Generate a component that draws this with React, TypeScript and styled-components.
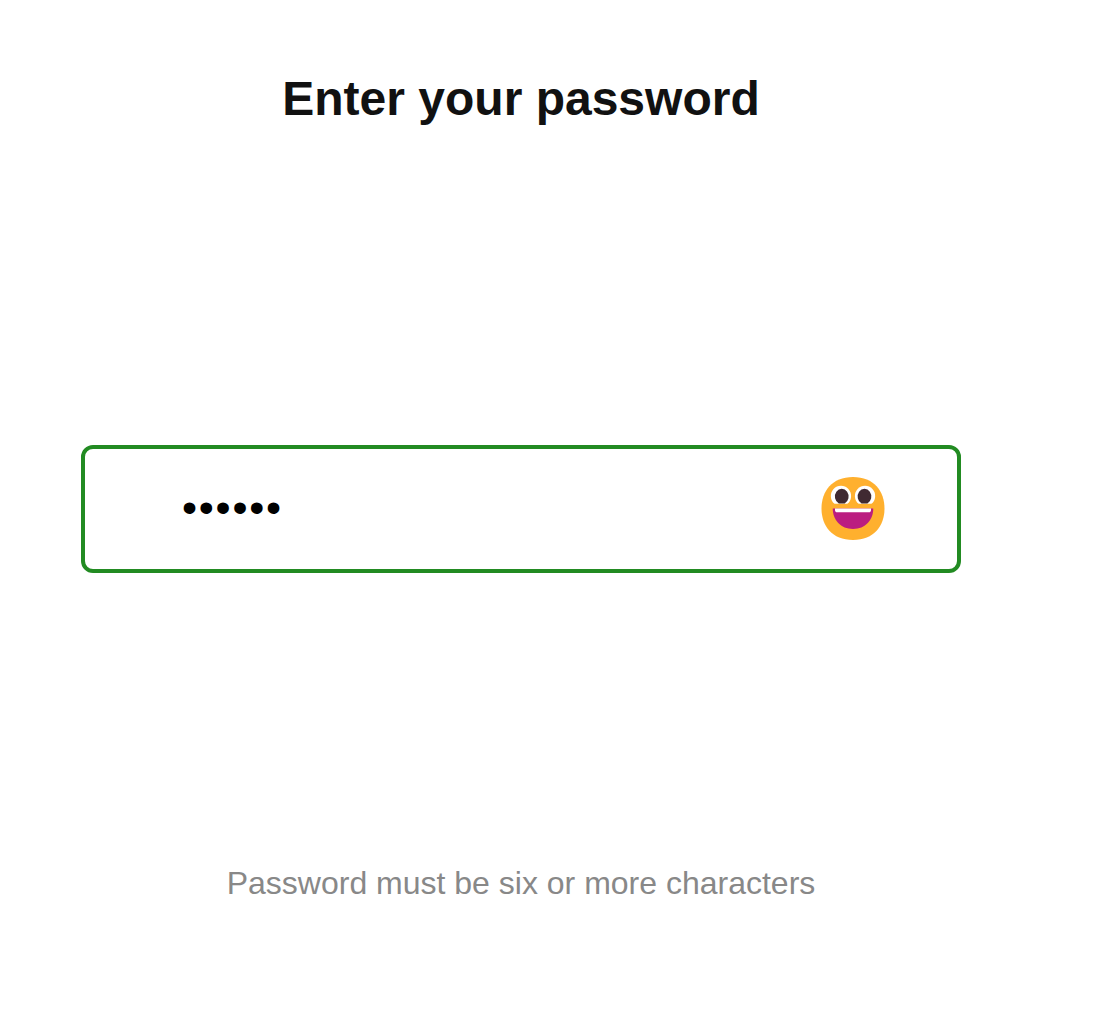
import React from "react";
import styled, { createGlobalStyle } from "styled-components";

const GlobalStyle = createGlobalStyle`
  * { box-sizing: border-box; }
  body { margin: 0; background: #fff; font-family: Arial, "Liberation Sans", sans-serif; }
`;

const Page = styled.main`
  width: 1042px;
  height: 1019px;
  padding: 71px 81px 0;
  display: flex;
  flex-direction: column;
  align-items: center;
`;

const Title = styled.h1`
  margin: 0;
  color: #111;
  font-size: 48px;
  line-height: 56px;
  font-weight: 700;
  white-space: nowrap;
`;

const Field = styled.label`
  width: 880px;
  height: 128px;
  margin-top: 318px;
  padding: 0 68px 1px 97px;
  display: flex;
  align-items: center;
  border: 4px solid #228b22;
  border-radius: 12px;
`;

const PasswordInput = styled.input`
  flex: 1;
  min-width: 0;
  padding: 0 0 2px;
  border: 0;
  outline: 0;
  background: transparent;
  color: #000;
  font: 43px Arial, "Liberation Sans", sans-serif;
  letter-spacing: 1.75px;
`;

const Face = styled.svg`
  width: 72px;
  height: 72px;
  flex: none;
`;

const Hint = styled.p`
  margin: 292px 0 0;
  color: #888;
  font-size: 32px;
  line-height: 36px;
  white-space: nowrap;
`;

const HappyFace = () => (
  <Face viewBox="0 0.2 32 32" aria-hidden="true">
    <path fill="#FFB02E" d="M16 30C25.33 30 30 23.73 30 16S25.33 2 16 2 2 8.27 2 16s4.67 14 14 14Z" />
    <path fill="#fff" d="M7.8 13.9A4.5 4.5 0 1 1 13.5 13.9Z" />
    <path fill="#fff" d="M18.5 13.9A4.5 4.5 0 1 1 24.2 13.9Z" />
    <path fill="#402A32" d="M9.7 13.7A3.05 3.4 0 1 1 12.3 13.7Z" />
    <path fill="#402A32" d="M19.8 13.7A3.05 3.4 0 1 1 22.4 13.7Z" />
    <path fill="#BB1D80" d="M7 16h18c0 5.1-3.5 9.1-9 9.1S7 21.1 7 16Z" />
    <path fill="#fff" d="M8 16h16v.7c0 .55-.4.9-.9.9H8.9c-.5 0-.9-.35-.9-.9Z" />
  </Face>
);

export default function App() {
  return (
    <>
      <GlobalStyle />
      <Page>
        <Title>Enter your password</Title>
        <Field>
          <PasswordInput type="password" defaultValue="secret" aria-label="Password" />
          <HappyFace />
        </Field>
        <Hint>Password must be six or more characters</Hint>
      </Page>
    </>
  );
}
